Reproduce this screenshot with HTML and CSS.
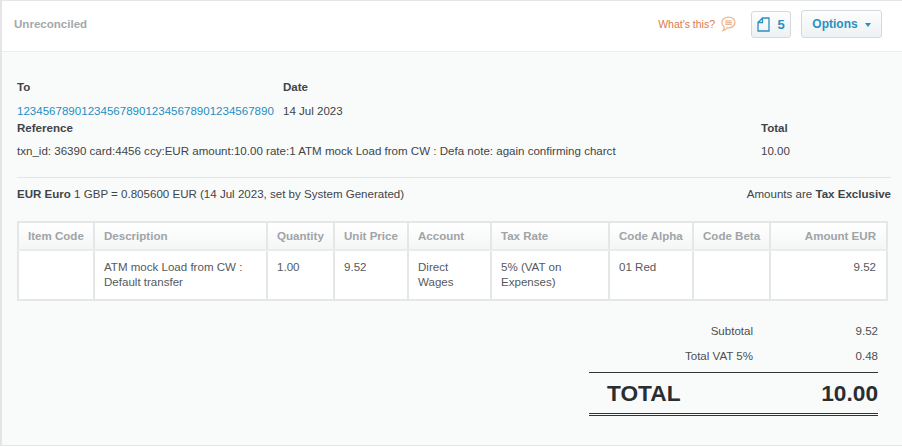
FILE: index.html
```html
<!DOCTYPE html>
<html lang="en">
<head>
<meta charset="utf-8">
<title>Unreconciled</title>
<link rel="stylesheet" href="styles.css">
</head>
<body>
<div class="panel">
  <header class="head">
    <h1 class="status">Unreconciled</h1>
    <a class="whats">What's this?
      <svg class="bubble" width="16" height="16" viewBox="0 0 15 15" fill="none" stroke="#ecb68f" stroke-width="1.2"><path d="M8 1c3 0 6 2.100 6 5.100s-3 5-6 5c-.5 0-.9 0-1.200-.1-.6 1.300-2 2.500-4 2.800.8-.9 1.200-1.900 1.200-3.400C2.500 9.300 1.800 7.800 1.800 6.100 1.800 3.100 5 1 8 1z"/><path d="M5 4.500h6M5 6.200h6M5 7.900h6"/></svg>
    </a>
    <button class="btn count">
      <svg width="13" height="15" viewBox="0 0 13 15" fill="none" stroke="#2b8fc0" stroke-width="1.3"><path d="M1 5.500 5.500 1H12v13H1z"/><path d="M5.500 1v4.500H1"/></svg>
      <span>5</span>
    </button>
    <button class="btn options">Options <i class="caret"></i></button>
  </header>
  <main class="body">
    <div class="meta">
      <div class="to">
        <div class="label">To</div>
        <a class="link">1234567890123456789012345678901234567890</a>
      </div>
      <div class="date">
        <div class="label">Date</div>
        <div class="value">14 Jul 2023</div>
      </div>
    </div>
    <div class="ref-row">
      <div>
        <div class="label">Reference</div>
        <div class="value ref-text">txn_id: 36390 card:4456 ccy:EUR amount:10.00 rate:1 ATM mock Load from CW : Defa note: again confirming charct</div>
      </div>
      <div class="ref-total">
        <div class="label">Total</div>
        <div class="value ref-text">10.00</div>
      </div>
    </div>
    <div class="rate">
      <div><b>EUR Euro</b> 1 GBP = 0.805600 EUR (14 Jul 2023, set by System Generated)</div>
      <div>Amounts are <b>Tax Exclusive</b></div>
    </div>
    <table class="items">
      <colgroup>
        <col class="c1"><col class="c2"><col class="c3"><col class="c4"><col class="c5"><col class="c6"><col class="c7"><col class="c8"><col class="c9">
      </colgroup>
      <thead>
        <tr>
          <th>Item Code</th><th>Description</th><th>Quantity</th><th>Unit Price</th><th>Account</th><th>Tax Rate</th><th>Code Alpha</th><th>Code Beta</th><th class="num">Amount EUR</th>
        </tr>
      </thead>
      <tbody>
        <tr>
          <td></td><td>ATM mock Load from CW : Default transfer</td><td>1.00</td><td>9.52</td><td>Direct Wages</td><td>5% (VAT on Expenses)</td><td>01 Red</td><td></td><td class="num">9.52</td>
        </tr>
      </tbody>
    </table>
    <div class="totals">
      <div class="line"><span class="tl">Subtotal</span><span class="tv">9.52</span></div>
      <div class="line"><span class="tl">Total VAT 5%</span><span class="tv">0.48</span></div>
      <div class="grand"><span>TOTAL</span><span>10.00</span></div>
    </div>
  </main>
</div>
</body>
</html>
```
FILE: styles.css
```css
* { box-sizing: border-box; }
html, body { margin: 0; padding: 0; }
body {
  width: 902px;
  height: 447px;
  overflow: hidden;
  background: #fff;
  font-family: "Liberation Sans", Arial, sans-serif;
  font-size: 11.55px;
  color: #3f4448;
}
.panel {
  width: 902px;
  height: 446px;
  border: 1px solid #e3e5e6;
  border-right: 0;
  border-left-width: 2px;
  background: #f9fbfb;
  display: flex;
  flex-direction: column;
}
.head {
  height: 51px;
  flex: none;
  background: #fff;
  border-bottom: 1px solid #ebeded;
  display: flex;
  align-items: center;
  padding: 0 20px 4px 12px;
}
.status {
  margin: 0 auto 0 0;
  font-size: 11.55px;
  font-weight: bold;
  color: #a4a8ab;
}
.whats {
  display: flex;
  align-items: center;
  gap: 5px;
  font-size: 10.5px;
  color: #d9794a;
  margin-right: 15px;
}
.btn {
  font-family: inherit;
  font-weight: bold;
  font-size: 12px;
  color: #2b8fc0;
  background: linear-gradient(#fdfefe, #edf1f3);
  border: 1px solid #d3d9dc;
  border-radius: 3px;
  height: 27px;
  display: flex;
  align-items: center;
  padding: 0;
}
.count { width: 40px; justify-content: center; gap: 7px; margin-right: 10px; font-size: 13px; }
.options { width: 81px; justify-content: center; gap: 7px; height: 28px; }
.caret {
  width: 0; height: 0;
  margin-top: 2px;
  border-left: 3.500px solid transparent;
  border-right: 3.500px solid transparent;
  border-top: 4px solid #2b8fc0;
}
.body { flex: 1; padding: 27px 11px 0 15px; }
.label { font-weight: bold; line-height: 16px; }
.meta { display: flex; }
.to { width: 266px; }
.link { display: block; color: #1f8fc0; line-height: 16px; margin-top: 8px; }
.date .value { margin-top: 8px; line-height: 16px; }
.ref-row { display: flex; justify-content: space-between; margin-top: 1px; }
.ref-row > div:first-child { flex: 1; }
.ref-total { width: 130px; }
.ref-text { margin-top: 7px; line-height: 16px; }
.rate {
  margin-top: 18px;
  border-top: 1px solid #e3e5e6;
  padding-top: 8px;
  display: flex;
  justify-content: space-between;
  line-height: 16px;
}
.items {
  margin-top: 19px;
  width: 869px;
  table-layout: fixed;
  border-collapse: collapse;
  background: #fff;
  border: 2px solid #e4e7e8;
}
.c1 { width: 76px; } .c2 { width: 173px; } .c3 { width: 67px; } .c4 { width: 74px; }
.c5 { width: 83px; } .c6 { width: 118px; } .c7 { width: 84px; } .c8 { width: 77px; } .c9 { width: 117px; }
.items th, .items td {
  border: 1px solid #e4e7e8;
  border-width: 0 2px 0 0;
  padding: 0 10px 0 9px;
  text-align: left;
  vertical-align: top;
}
.items th {
  height: 28px;
  vertical-align: middle;
  white-space: nowrap;
  font-weight: bold;
  color: #a0a4a7;
  background: linear-gradient(#fff, #f4f6f6);
  border-bottom: 2px solid #e9ebec;
}
.items td { height: 50px; padding-top: 9px; line-height: 15px; color: #55595c; }
.items .num { text-align: right; }
.totals { width: 289px; margin: 22px 0 0 auto; position: relative; left: -13px; }
.line { display: flex; justify-content: flex-end; line-height: 16px; margin-bottom: 9px; color: #4b4f53; }
.tv { width: 125px; text-align: right; }
.grand {
  display: flex;
  justify-content: space-between;
  align-items: center;
  height: 44px;
  padding-left: 18px;
  border-top: 1px solid #333;
  border-bottom: 3px double #333;
  margin-top: -1px;
  font-size: 22.7px;
  font-weight: bold;
  color: #2a2e31;
}
```
